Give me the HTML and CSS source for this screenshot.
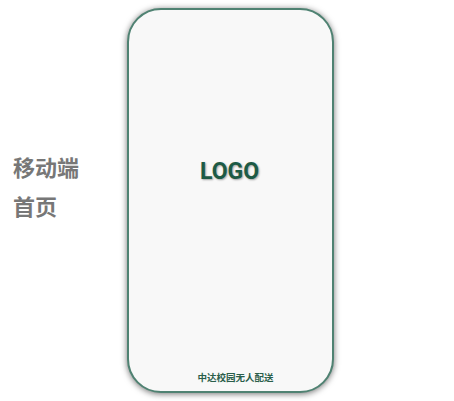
FILE: index.html
```html
<!DOCTYPE html>
<html lang="zh-CN">
<head>
    <meta charset="UTF-8">
    <meta name="viewport" content="width=device-width, initial-scale=1.0">
    <title>移动端首页</title>
    <link rel="stylesheet" href="styles.css">
</head>
<body>
    <div class="page">
        <div class="side-title">
            <p>移动端</p>
            <p>首页</p>
        </div>

        <div class="phone">
            <div class="logo">LOGO</div>
            <div class="footer-name">中达校园无人配送</div>
        </div>
    </div>
</body>
</html>
```

FILE: styles.css
```css
:root {
    --brand-green: #1c5a45;
    --frame-green: #4f8272;
    --screen-bg: #f8f8f8;
    --side-gray: #777;
}

* {
    box-sizing: border-box;
    margin: 0;
    padding: 0;
}

body {
    font-family: "Noto Sans CJK SC", "Noto Sans", sans-serif;
    background: #fff;
    width: 454px;
    height: 401px;
    overflow: hidden;
}

.page {
    display: flex;
    align-items: flex-start;
    height: 100%;
}

.side-title {
    width: 127px;
    padding-left: 13px;
    margin-top: 147px;
    color: var(--side-gray);
    font-size: 22px;
    font-weight: 700;
    line-height: 39px;
}

.phone {
    margin-top: 8px;
    width: 207px;
    height: 385px;
    background: var(--screen-bg);
    border: 2px solid var(--frame-green);
    border-radius: 34px;
    box-shadow: 0 1px 6px rgba(0, 0, 0, 0.55);
    display: flex;
    flex-direction: column;
    align-items: center;
}

.logo {
    margin-top: 147px;
    margin-right: 2px;
    font-family: Roboto, "Liberation Sans", sans-serif;
    font-size: 23px;
    font-weight: 700;
    line-height: 30px;
    color: var(--brand-green);
    text-shadow: 1px 1px 2px rgba(0, 0, 0, 0.35);
}

.footer-name {
    margin-top: auto;
    margin-bottom: 7px;
    margin-left: 10px;
    font-size: 9.5px;
    font-weight: 700;
    line-height: 14px;
    color: #2a5e4a;
}
```
